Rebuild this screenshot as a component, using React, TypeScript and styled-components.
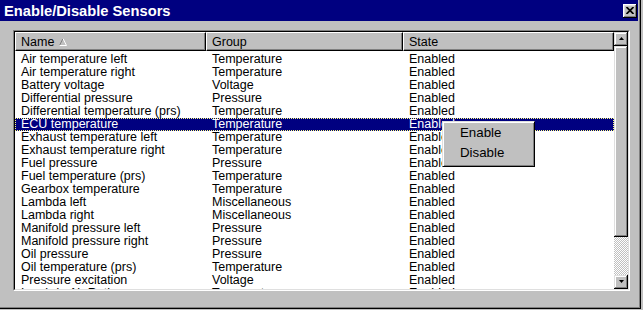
import React from 'react';
import styled, { createGlobalStyle } from 'styled-components';

interface Sensor {
  name: string;
  group: string;
  state: string;
}

const sensors: Sensor[] = [
  { name: 'Air temperature left', group: 'Temperature', state: 'Enabled' },
  { name: 'Air temperature right', group: 'Temperature', state: 'Enabled' },
  { name: 'Battery voltage', group: 'Voltage', state: 'Enabled' },
  { name: 'Differential pressure', group: 'Pressure', state: 'Enabled' },
  { name: 'Differential temperature (prs)', group: 'Temperature', state: 'Enabled' },
  { name: 'ECU temperature', group: 'Temperature', state: 'Enabled' },
  { name: 'Exhaust temperature left', group: 'Temperature', state: 'Enabled' },
  { name: 'Exhaust temperature right', group: 'Temperature', state: 'Enabled' },
  { name: 'Fuel pressure', group: 'Pressure', state: 'Enabled' },
  { name: 'Fuel temperature (prs)', group: 'Temperature', state: 'Enabled' },
  { name: 'Gearbox temperature', group: 'Temperature', state: 'Enabled' },
  { name: 'Lambda left', group: 'Miscellaneous', state: 'Enabled' },
  { name: 'Lambda right', group: 'Miscellaneous', state: 'Enabled' },
  { name: 'Manifold pressure left', group: 'Pressure', state: 'Enabled' },
  { name: 'Manifold pressure right', group: 'Pressure', state: 'Enabled' },
  { name: 'Oil pressure', group: 'Pressure', state: 'Enabled' },
  { name: 'Oil temperature (prs)', group: 'Temperature', state: 'Enabled' },
  { name: 'Pressure excitation', group: 'Voltage', state: 'Enabled' },
  { name: 'Lambda Air Ratio', group: 'Temperature', state: 'Enabled' },
];

const SELECTED = 5;
const narrow = '"Liberation Sans Narrow", "Arial Narrow", "Liberation Sans", Arial, sans-serif';

const GlobalStyle = createGlobalStyle`
  html, body {
    margin: 0;
    padding: 0;
    background: #c0c0c0;
  }
  body {
    width: 643px;
    height: 310px;
    overflow: hidden;
    font-family: "Liberation Sans", Arial, sans-serif;
  }
`;

const Window = styled.div`
  position: relative;
  box-sizing: border-box;
  width: 641px;
  height: 309px;
  padding-right: 3px;
  background: #c0c0c0;
  box-shadow: inset -1px -1px 0 #000, inset -2px -2px 0 #808080;
`;

const TitleBar = styled.div`
  display: flex;
  align-items: center;
  justify-content: space-between;
  height: 21px;
  padding: 0 1px 0 4px;
  background: #000080;
`;

const Title = styled.span`
  margin-top: 2px;
  color: #fff;
  font: bold 14.7px "Liberation Sans", Arial, sans-serif;
  line-height: 17px;
  white-space: nowrap;
`;

const CloseButton = styled.div`
  display: flex;
  align-items: center;
  justify-content: center;
  width: 14px;
  height: 14px;
  box-sizing: border-box;
  background: #c0c0c0;
  box-shadow: inset -1px -1px 0 #000, inset 1px 1px 0 #fff, inset -2px -2px 0 #808080, inset 2px 2px 0 #dfdfdf;
`;

const ListFrame = styled.div`
  box-sizing: border-box;
  margin: 9px 0 0 13px;
  width: 617px;
  height: 261px;
  border: 1px solid;
  border-color: #808080 #fff #fff #808080;
`;

const ListInner = styled.div`
  box-sizing: border-box;
  display: flex;
  height: 100%;
  border: 1px solid;
  border-color: #000 #dfdfdf #dfdfdf #000;
  background: #fff;
`;

const Columns = styled.div`
  flex: 1;
  display: flex;
  flex-direction: column;
  overflow: hidden;
  font-family: ${narrow};
  font-size: 12.5px;
  color: #000;
`;

const HeaderRow = styled.div`
  display: grid;
  grid-template-columns: 191px 197px 211px;
  height: 19px;
  flex-shrink: 0;
`;

const HeaderCell = styled.div`
  box-sizing: border-box;
  display: flex;
  align-items: flex-start;
  height: 19px;
  padding: 2px 0 0 5px;
  line-height: 14px;
  background: #c0c0c0;
  border: 1px solid;
  border-color: #fff #000 #000 #fff;
  box-shadow: inset -1px -1px 0 #808080;
  white-space: nowrap;
`;

const SortArrow = styled.svg`
  margin: 3px 0 0 5px;
`;

const Body = styled.div`
  flex: 1;
  padding-top: 2px;
  overflow: hidden;
`;

const Row = styled.div<{ $selected?: boolean }>`
  box-sizing: border-box;
  display: grid;
  grid-template-columns: 191px 197px 211px;
  height: 13px;
  line-height: 13px;
  background: ${(p) => (p.$selected ? '#000080' : 'transparent')};
  color: ${(p) => (p.$selected ? '#fff' : '#000')};
  outline: ${(p) => (p.$selected ? '1px dotted #ffff80' : 'none')};
  outline-offset: -1px;
`;

const Cell = styled.div`
  padding-left: 6px;
  white-space: nowrap;
  overflow: hidden;
`;

const Scrollbar = styled.div`
  display: flex;
  flex-direction: column;
  width: 14px;
  flex-shrink: 0;
`;

const raised = `
  background: #c0c0c0;
  box-shadow: inset -1px -1px 0 #000, inset 1px 1px 0 #dfdfdf, inset -2px -2px 0 #808080, inset 2px 2px 0 #fff;
`;

const ScrollButton = styled.div`
  ${raised}
  display: flex;
  align-items: center;
  justify-content: center;
  height: 14px;
  flex-shrink: 0;
`;

const Thumb = styled.div`
  ${raised}
  height: 191px;
  flex-shrink: 0;
`;

const Track = styled.div`
  flex: 1;
  background-image: conic-gradient(#fff 25%, #c0c0c0 0 50%, #fff 0 75%, #c0c0c0 0);
  background-size: 2px 2px;
`;

const Menu = styled.div`
  position: absolute;
  left: 442px;
  top: 121px;
  box-sizing: border-box;
  width: 93px;
  height: 46px;
  padding: 0;
  background: #c0c0c0;
  border: 1px solid;
  border-color: #dfdfdf #000 #000 #dfdfdf;
  box-shadow: inset 1px 1px 0 #fff, inset -1px -1px 0 #808080;
`;

const MenuItem = styled.div`
  height: 20px;
  padding-left: 17px;
  margin-top: 3px;
  line-height: 20px;
  font: 13.3px "Liberation Sans", Arial, sans-serif;
  color: #000;
  & + & {
    margin-top: 0;
  }
`;

const Arrow: React.FC<{ down?: boolean }> = ({ down }) => (
  <svg width="7" height="4" viewBox="0 0 7 4">
    <polygon points={down ? '1,0 6,0 3.5,3' : '3.5,0 6,3 1,3'} fill="#000" />
  </svg>
);

export default function App() {
  return (
    <>
      <GlobalStyle />
      <Window>
        <TitleBar>
          <Title>Enable/Disable Sensors</Title>
          <CloseButton>
            <svg width="8" height="7" viewBox="0 0 8 7">
              <path d="M0.5 0 L7.5 7 M7.5 0 L0.5 7" stroke="#000" strokeWidth="1.7" />
            </svg>
          </CloseButton>
        </TitleBar>

        <ListFrame>
          <ListInner>
            <Columns>
              <HeaderRow>
                <HeaderCell>
                  Name
                  <SortArrow width="8" height="8" viewBox="0 0 8 8">
                    <path d="M4 0.5 L0.5 7.5" stroke="#808080" strokeWidth="1" fill="none" />
                    <path d="M4 0.5 L7.5 7.5 L0.5 7.5" stroke="#fff" strokeWidth="1" fill="none" />
                  </SortArrow>
                </HeaderCell>
                <HeaderCell>Group</HeaderCell>
                <HeaderCell>State</HeaderCell>
              </HeaderRow>
              <Body>
                {sensors.map((s, i) => (
                  <Row key={s.name} $selected={i === SELECTED}>
                    <Cell>{s.name}</Cell>
                    <Cell>{s.group}</Cell>
                    <Cell>{s.state}</Cell>
                  </Row>
                ))}
              </Body>
            </Columns>
            <Scrollbar>
              <ScrollButton>
                <Arrow />
              </ScrollButton>
              <Thumb />
              <Track />
              <ScrollButton>
                <Arrow down />
              </ScrollButton>
            </Scrollbar>
          </ListInner>
        </ListFrame>

        <Menu>
          <MenuItem>Enable</MenuItem>
          <MenuItem>Disable</MenuItem>
        </Menu>
      </Window>
    </>
  );
}
